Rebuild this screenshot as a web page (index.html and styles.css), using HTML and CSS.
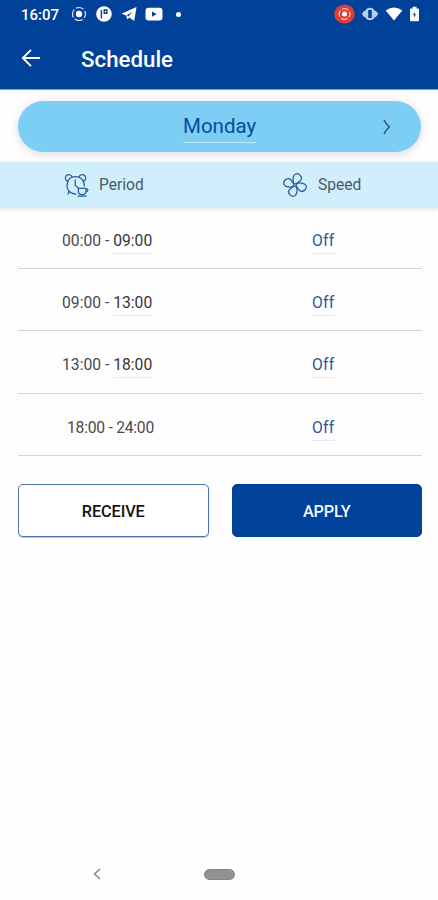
FILE: index.html
```html
<!DOCTYPE html>
<html lang="en">
<head>
<meta charset="utf-8">
<title>Schedule</title>
<link rel="stylesheet" href="styles.css">
</head>
<body>
<div class="screen">
  <header class="header">
    <div class="status">
      <span class="clock">16:07</span>
      <div class="notifications">
        <svg width="16" height="16" viewBox="0 0 16 16" fill="none" stroke="#dfe9f6"><circle cx="8" cy="8" r="6.5" stroke-width="1.2" stroke-dasharray="8.2 2" stroke-dashoffset="4"/><circle cx="8" cy="8" r="3.2" fill="#fff" stroke="none"/></svg>
        <svg width="16" height="16" viewBox="0 0 16 16"><circle cx="8" cy="8" r="7.8" fill="#fff"/><path d="M5.4 12.5V4M8.2 4H10.8V7.2H8.2z" fill="none" stroke="#004299" stroke-width="1.4"/></svg>
        <svg width="16" height="16" viewBox="0 0 16 16"><path d="M.5 7.8 15.5 1 13.2 15 8.2 11.6 6.3 13.6 5.2 9.5z" fill="#fff"/><path d="m5.8 9.4 5.6-4-4 5.2" fill="#004299"/></svg>
        <svg width="18" height="16" viewBox="0 0 18 16"><rect x=".5" y="1.8" width="17" height="12.8" rx="3" fill="#fff"/><path d="m7 5.6 4.6 2.5L7 10.7z" fill="#004299"/></svg>
        <i class="dot"></i>
      </div>
      <div class="system">
        <svg width="21" height="20" viewBox="0 0 21 20"><ellipse cx="10.5" cy="10" rx="10.3" ry="9.5" fill="#df3d36"/><circle cx="10.5" cy="10" r="5.4" fill="none" stroke="#fff" stroke-dasharray="6.5 2" stroke-dashoffset="3.2"/><circle cx="10.5" cy="10" r="2.5" fill="#fff"/></svg>
        <svg width="18" height="16" viewBox="0 0 18 16"><path d="M.8 8 3 5 4.5 4.5 6 2.5Q9 .9 12 2.5L13.5 4.5 15 5 17.2 8 15 11 13.5 11.5 12 13.5Q9 15.1 6 13.5L4.5 11.5 3 11z" fill="#b5d0ef"/><rect x="7.2" y="4" width="3.6" height="8" fill="#004299"/></svg>
        <svg width="18" height="16" viewBox="0 0 18 16"><path d="M.7 4.6Q9-1.8 17.3 4.6L9 14.4z" fill="#fff"/></svg>
        <svg width="11" height="16" viewBox="0 0 11 16"><path d="M1.8 2.5H3.5V.8H7.5V2.5H9.2Q10 2.5 10 3.4V14.2Q10 15.2 9 15.2H2Q1 15.2 1 14.2V3.4Q1 2.5 1.8 2.5z" fill="#f5f9fc"/><path d="M6 5.8 3.6 9.2h1.6L4.9 11.8 7.3 8.2H5.9z" fill="#37628f"/></svg>
      </div>
    </div>
    <div class="titlebar">
      <svg width="22" height="22" viewBox="0 0 22 22" fill="none" stroke="#fff" stroke-width="1.9"><path d="M20 11H3M11 2.8 2.8 11l8.2 8.2"/></svg>
      <h1>Schedule</h1>
    </div>
  </header>

  <main>
    <div class="day">
      <span class="day-name">Monday</span>
      <svg class="next" width="10" height="18" viewBox="0 0 10 18" fill="none" stroke="#31526b" stroke-width="1.5"><path d="M2 2Q4 6 7.2 9 4 12 2 16"/></svg>
    </div>

    <div class="columns">
      <div class="column">
        <svg width="25" height="24" viewBox="0 0 25 24" fill="none" stroke="#29609c" stroke-width="1.25" stroke-linecap="round" stroke-linejoin="round"><path d="M8 4.2Q11.5 2.9 15 4.2M4.4 7.4C2.6 10.8 2.6 14.5 4.5 17.5 6.2 19.6 8.5 21 12 21M18.8 7.4Q20.3 9.8 20.4 13M5 18.3 4 21M11.2 6.8v5.4l3 2.6"/><path d="M3 8.2C.7 6.6.8 2.8 3.4 1.8 5.4 1 7.6 2.2 8 4.2 6.2 5 4.8 6.2 4.4 7.4zM20 8.2C22.4 6.6 22.3 2.8 19.6 1.8 17.6 1 15.4 2.2 15 4.2 16.8 5 18.2 6.2 18.8 7.4z"/><path d="M14.3 15.3H22V18Q22 21 19.5 21.5H16.8Q14.3 21 14.3 18zM22 16Q24.3 15.7 23.7 17.7 23.2 19 21.7 19M14 23.2H22"/></svg>
        <span>Period</span>
      </div>
      <div class="column">
        <svg width="24" height="24" viewBox="0 0 24 24" fill="none" stroke="#29579d" stroke-width="1.25" stroke-linejoin="round"><g id="blade"><path d="M11.2 10.7C9 7.5 9.8 2.3 12.6 1 15.5-.1 18.8 2.8 18.4 6 18 8.8 14.3 8.6 13.3 11"/></g><use href="#blade" transform="rotate(90 12 12)"/><use href="#blade" transform="rotate(180 12 12)"/><use href="#blade" transform="rotate(270 12 12)"/><circle cx="12" cy="12" r="1.4"/></svg>
        <span>Speed</span>
      </div>
    </div>

    <div class="rows">
      <div class="row"><div class="period">00:00 - <span class="end">09:00</span></div><div class="speed"><span>Off</span></div></div>
      <div class="row"><div class="period">09:00 - <span class="end">13:00</span></div><div class="speed"><span>Off</span></div></div>
      <div class="row"><div class="period">13:00 - <span class="end">18:00</span></div><div class="speed"><span>Off</span></div></div>
      <div class="row"><div class="period last">18:00 - 24:00</div><div class="speed"><span>Off</span></div></div>
    </div>

    <div class="actions">
      <button class="button outline">RECEIVE</button>
      <button class="button solid">APPLY</button>
    </div>
  </main>

  <nav class="nav">
    <svg width="10" height="14" viewBox="0 0 10 14" fill="none" stroke="#858585" stroke-width="1.5"><path d="M8 2 2.5 7 8 12"/></svg>
    <i class="home"></i>
  </nav>
</div>
</body>
</html>
```
FILE: styles.css
```css
* { box-sizing: border-box; }

body {
  margin: 0;
  background: #fefefe;
  color: #4a4a4a;
  font-family: Roboto, "Liberation Sans", sans-serif;
}

svg { display: block; flex: none; }

.screen {
  display: flex;
  flex-direction: column;
  width: 438px;
  height: 900px;
  overflow: hidden;
}

.header {
  height: 90px;
  background: #004299;
  border-bottom: 1px solid #8299c7;
  color: #fff;
}

.status {
  display: flex;
  align-items: center;
  height: 28px;
  padding: 0 18px 0 21px;
}

.clock {
  width: 50px;
  font-size: 15px;
  font-weight: 500;
  padding-top: 2px;
}

.notifications { display: flex; align-items: center; gap: 9px; }

.notifications svg:nth-child(3) { margin-right: -1px; }

.dot {
  width: 5px;
  height: 5px;
  margin-left: 4px;
  border-radius: 50%;
  background: #fff;
}

.system { display: flex; align-items: center; gap: 6px; margin-left: auto; }

.titlebar {
  display: flex;
  align-items: center;
  height: 61px;
  padding: 0 20px;
}

.titlebar svg { margin-bottom: 2px; }

h1 {
  margin: 1px 0 0 39px;
  font-size: 22.3px;
  font-weight: 500;
}

main { flex: 1; }

.day {
  display: flex;
  align-items: center;
  height: 51px;
  margin: 11px 17px 10px 18px;
  border-radius: 26px;
  background: #7ccef4;
  box-shadow: 0 2px 8px rgba(60, 60, 110, .2);
}

.day-name {
  margin-left: 165px;
  border-bottom: 1px solid #b5e9fc;
  color: #084b98;
  font-size: 20.5px;
  line-height: 31px;
}

.next { margin: 0 29px 0 auto; }

.columns {
  display: flex;
  height: 46px;
  background: #d1eefd;
  box-shadow: 0 1px 4px rgba(90, 70, 90, .17);
}

.column {
  display: flex;
  align-items: center;
  width: 219px;
  padding-left: 64px;
  color: #4b5b65;
  font-size: 15.6px;
}

.column span { margin: 0 0 1px 10px; }

.column:last-child span { margin-left: 11px; }

.rows { margin: 0 16px 0 18px; }

.row {
  display: flex;
  height: 62.4px;
  padding-top: 24px;
  border-bottom: 1px solid #d4d4d4;
  font-size: 15.7px;
  line-height: 20px;
}

.row:first-child { height: 61px; padding-top: 23px; }

.period { width: 294px; padding-left: 44px; }

.last { padding-left: 49px; letter-spacing: -.25px; }

.end, .speed span {
  display: inline-block;
  height: 23px;
  border-bottom: 1px solid #e2ebf5;
}

.end { color: #363636; }

.speed { color: #2e569c; letter-spacing: .3px; }

.actions {
  display: flex;
  gap: 23px;
  margin: 28px 16px 0 18px;
}

.button {
  flex: 1;
  height: 53px;
  padding: 1px 0 0;
  border: 1px solid #4d74ad;
  border-radius: 5px;
  font-family: inherit;
  font-size: 16.3px;
  font-weight: 500;
}

.outline { background: #fff; color: #141414; box-shadow: 0 1px 1px #b9c5d9; letter-spacing: -.1px; }

.solid { background: #004299; border-color: #004299; color: #f4f7ff; letter-spacing: -.15px; }

.nav {
  display: flex;
  align-items: center;
  height: 52px;
  padding-left: 92px;
}

.home {
  width: 31px;
  height: 11px;
  margin-left: 102px;
  border-radius: 6px;
  background: #929292;
  border: 1px solid #828282;
}
```
